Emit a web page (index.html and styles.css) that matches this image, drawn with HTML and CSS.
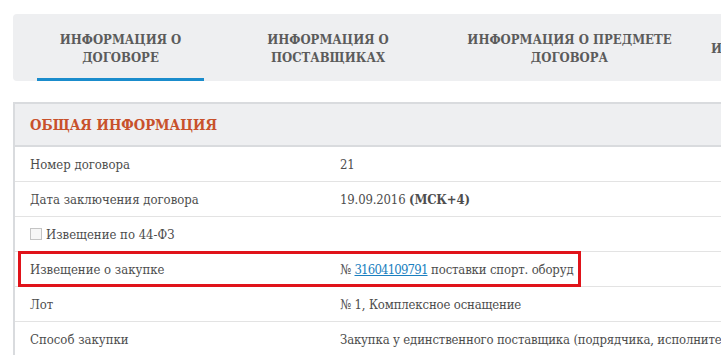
FILE: index.html
```html
<!DOCTYPE html>
<html lang="ru">
<head>
    <meta charset="UTF-8">
    <title>Информация о договоре</title>
    <link rel="stylesheet" href="styles.css">
</head>
<body>

    <div class="page">
        <div class="tabs">
            <div class="tab tab-active">ИНФОРМАЦИЯ О<br>ДОГОВОРЕ</div>
            <div class="tab">ИНФОРМАЦИЯ О<br>ПОСТАВЩИКАХ</div>
            <div class="tab">ИНФОРМАЦИЯ О ПРЕДМЕТЕ<br>ДОГОВОРА</div>
            <div class="tab">ИНФОРМАЦИЯ ОБ ИСПОЛНЕНИИ</div>
        </div>

        <div class="card">
            <div class="card-header">ОБЩАЯ ИНФОРМАЦИЯ</div>

            <div class="row">
                <div class="label">Номер договора</div>
                <div class="value">21</div>
            </div>
            <div class="row">
                <div class="label">Дата заключения договора</div>
                <div class="value">19.09.2016 <b>(МСК+4)</b></div>
            </div>
            <div class="row">
                <div class="label"><span class="checkbox"></span>Извещение по 44-ФЗ</div>
                <div class="value"></div>
            </div>
            <div class="row row-marked">
                <div class="label">Извещение о закупке</div>
                <div class="value">№ <a href="#">31604109791</a> поставки спорт. оборуд</div>
                <!-- рамка-выделение поверх строки -->
                <div class="mark"></div>
            </div>
            <div class="row">
                <div class="label">Лот</div>
                <div class="value">№ 1, Комплексное оснащение</div>
            </div>
            <div class="row">
                <div class="label">Способ закупки</div>
                <div class="value">Закупка у единственного поставщика (подрядчика, исполнителя)</div>
            </div>
        </div>
    </div>

</body>
</html>
```

FILE: styles.css
```css
* {
    margin: 0;
    padding: 0;
    box-sizing: border-box;
}

body {
    font-family: 'DejaVu Serif Condensed', 'DejaVu Serif', serif;
    font-stretch: condensed;
    font-size: 13px;
    color: #4d4d4d;
    background: #fff;
    overflow: hidden;
}

.page {
    width: 800px;
    padding: 14px 0 0 13px;
}

.tabs {
    display: flex;
    height: 67px;
    padding-left: 24px;
    background-color: #eeeff1;
    border-radius: 4px 0 0 4px;
}

.tab {
    flex-shrink: 0;
    display: flex;
    align-items: center;
    justify-content: center;
    text-align: center;
    padding: 6px 0 0;
    margin-right: 40px;
    font-size: 13px;
    font-weight: bold;
    line-height: 18px;
    color: #5b5b5b;
    border-bottom: 3px solid transparent;
    white-space: nowrap;
}

.tab:nth-child(1) { width: 167px; }
.tab:nth-child(2) { width: 168px; margin-right: 31px; }
.tab:nth-child(3) { width: 253px; margin-right: 15px; }

.tab-active {
    border-bottom-color: #1a8ccc;
}

.card {
    margin-top: 21px;
    border-top: 2px solid #d9dbde;
    border-left: 2px solid #d9dbde;
}

.card-header {
    height: 43px;
    padding: 0 15px;
    display: flex;
    align-items: center;
    background-color: #eeeff1;
    border-bottom: 2px solid #d9dbde;
    font-size: 14.6px;
    font-weight: bold;
    color: #c8512b;
}

.row {
    display: flex;
    align-items: center;
    height: 35px;
    border-bottom: 1px solid #e3e3e3;
    position: relative;
}

.label {
    width: 325px;
    padding-left: 15px;
    display: flex;
    align-items: center;
}

.value {
    flex: 1;
    white-space: nowrap;
    letter-spacing: -0.15px;
}

.value a {
    color: #1a7fc0;
    letter-spacing: -0.8px;
}

.checkbox {
    width: 12px;
    height: 12px;
    margin-right: 4px;
    border: 1px solid #c4c4c4;
    background: #f6f6f6;
}

.mark {
    position: absolute;
    left: 3px;
    top: -1px;
    width: 563px;
    height: 36px;
    border: 3px solid #e0131a;
}
```
